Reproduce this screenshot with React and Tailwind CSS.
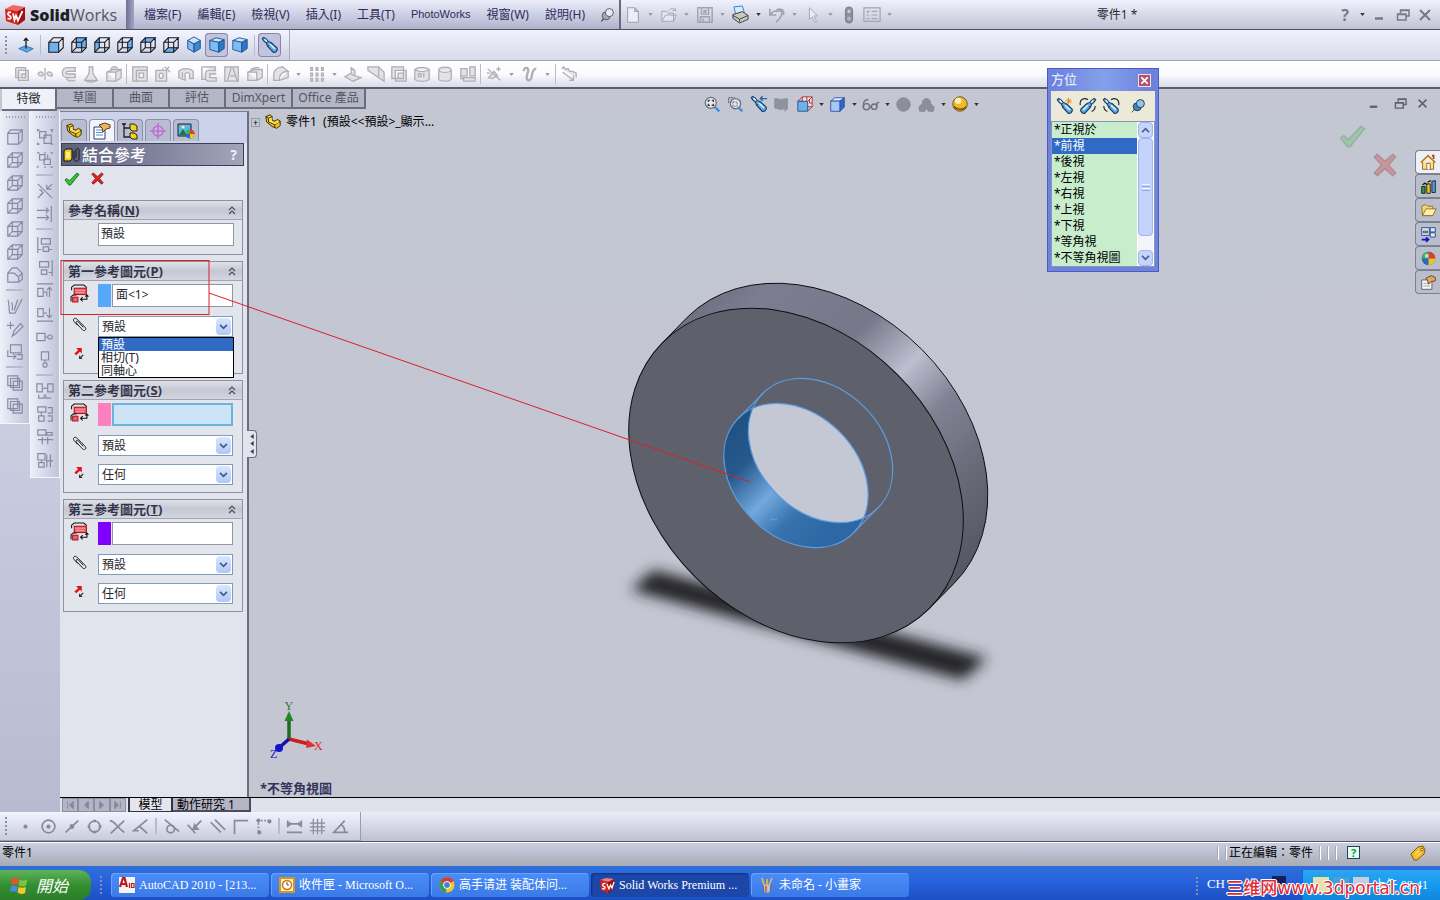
import React from "react";

const UI = "font-['Noto_Sans','Noto_Sans_CJK_TC',sans-serif]";

/* ---------- icon primitives ---------- */
function Ico({ children, className = "size-5" }) {
  return (
    <svg viewBox="0 0 20 20" fill="none" stroke="currentColor" className={className} aria-hidden="true">
      {children}
    </svg>
  );
}

const FACES = {
  front: "M2 7H13V18H2Z",
  back: "M7 2H18V13H7Z",
  left: "M2 7L7 2V13L2 18Z",
  right: "M13 7L18 2V13L13 18Z",
  top: "M2 7L7 2H18L13 7Z",
  bottom: "M2 18L7 13H18L13 18Z",
};

function WireCube({ face, fill = "#6db2ee" }) {
  return (
    <Ico className="size-[18px]">
      {face && <path d={FACES[face]} fill={fill} stroke="none" />}
      <path d="M2 7H13V18H2ZM2 7L7 2H18L13 7M18 2V13L13 18" strokeWidth="1.200" />
      {face !== "front" && <path d="M7 2V13H18M7 13L2 18" strokeWidth="1.200" />}
    </Ico>
  );
}

function SolidCube({ kind }) {
  if (kind === "iso")
    return (
      <Ico className="size-[18px]">
        <path d="M10 1L17 5L10 9L3 5Z" fill="#c9e5fd" stroke="#1e4f8f" />
        <path d="M3 5L10 9V18L3 14Z" fill="#7fbcf3" stroke="#1e4f8f" />
        <path d="M17 5L10 9V18L17 14Z" fill="#3d86d0" stroke="#1e4f8f" />
      </Ico>
    );
  return (
    <Ico className="size-[18px]">
      <path d="M2 5L9 2L18 4L12 7Z" fill="#c9e5fd" stroke="#1e4f8f" />
      <path d="M2 5L12 7V18L2 15Z" fill="#7fbcf3" stroke="#1e4f8f" />
      <path d="M18 4L12 7V18L18 14Z" fill="#2f78c4" stroke="#1e4f8f" />
    </Ico>
  );
}

function ScopeBody() {
  return (
    <>
      <path d="M1.500 3L3 1.500L6 3.500L8 6L11.500 7.500L18 13.500C19 16 16 19 13.500 18L7.500 11.500L6 8L3.500 6Z" fill="#5fa9e2" stroke="#173d66" strokeWidth="1.200" />
      <path d="M6 8L8 6M7.500 11.500L11.500 7.500" stroke="#173d66" />
      <path d="M4 3.500L6.500 6M9.500 8.500L15.500 14.500" stroke="#e2f4ff" strokeWidth="1.600" />
    </>
  );
}

function Scope({ extra }) {
  return (
    <Ico className="size-[18px]">
      <ScopeBody />
      {extra === "star" && <path d="M14 1V8M10.500 4.500H17.500M12 2L16.500 7M16.500 2L12 7" stroke="#e08a1c" />}
      {extra === "arrow" && <path d="M19 4H12M14 1.500L11.500 4L14 6.500" stroke="#2563a8" strokeWidth="1.500" />}
      {extra === "turn" && <path d="M10 3C14 0 20 3 18.500 9M2 10C2 13 3 15 6 16" stroke="#1d2a3a" strokeWidth="1.300" />}
    </Ico>
  );
}

function ScopeLeft() {
  return (
    <Ico className="size-[18px]">
      <g transform="translate(20 0) scale(-1 1)">
        <ScopeBody />
        <path d="M10 3C14 0 20 3 18.500 9M2 10C2 13 3 15 6 16" stroke="#1d2a3a" strokeWidth="1.300" />
      </g>
    </Ico>
  );
}

function Tool({ label, children, active, className = "h-6 w-[23px]" }) {
  return (
    <button
      type="button"
      aria-label={label}
      className={`flex shrink-0 items-center justify-center rounded ${className} ${active ? "bg-[#c2c3dc] ring-1 ring-inset ring-[#8a86a8]" : ""}`}
    >
      {children}
    </button>
  );
}

function Arrow({ dark, className = "w-[13px]" }) {
  return (
    <span className={`flex shrink-0 items-center justify-center ${className} ${dark ? "text-[#303038]" : "text-[#9a9aa6]"}`}>
      <svg viewBox="0 0 6 4" className="h-[3px] w-[5px]" aria-hidden="true">
        <path d="M0 0H6L3 4Z" fill="currentColor" />
      </svg>
    </span>
  );
}

const Sep = ({ className }) => <span className={`shrink-0 bg-[#b9bbca] bg-clip-content ${className}`} />;

const GripV = ({ className = "h-5" }) => (
  <span className={`w-1 shrink-0 bg-[radial-gradient(circle,#8a8ea6_1px,transparent_1px)] bg-[length:4px_4px] ${className}`} />
);

const GripH = () => (
  <span className="mt-1 mb-1.5 h-1 w-5 shrink-0 self-center bg-[radial-gradient(circle,#9a9eb4_1px,transparent_1px)] bg-[length:3px_4px]" />
);

function GreenCheck({ className = "size-4" }) {
  return (
    <svg viewBox="0 0 16 16" className={className} aria-hidden="true">
      <path d="M1 9L3 7.500L5.500 10L13 2L15 3.500L6.500 14L5 14Z" fill="#35c43a" stroke="#0f7a1a" />
    </svg>
  );
}

function RedCross({ className = "size-4" }) {
  return (
    <svg viewBox="0 0 16 16" className={className} aria-hidden="true">
      <path d="M2 3.500L3.500 2L8 6L12.500 2L14 3.500L10 8L14 12.500L12.500 14L8 10L3.500 14L2 12.500L6 8Z" fill="#e22424" stroke="#8f1414" />
    </svg>
  );
}

function WinGlyph({ kind, className = "size-3.5" }) {
  return (
    <svg viewBox="0 0 14 14" fill="none" stroke="currentColor" strokeWidth="1.500" className={className} aria-hidden="true">
      {kind === "min" && <path d="M3 10.500H11" strokeWidth="2.500" />}
      {kind === "max" && <path d="M4.500 5V2H13V8H10.500M1.500 6H10V12H1.500ZM1.500 6.500H10M4.500 2.500H13" />}
      {kind === "close" && <path d="M2 2L12 12M12 2L2 12" strokeWidth="2" />}
    </svg>
  );
}

function PartIcon({ className = "size-5" }) {
  return (
    <svg viewBox="0 0 20 20" className={className} stroke="#2a2206" aria-hidden="true">
      <path d="M2 4L7 2L9 4V8L12 9L15 7L18 9V14L14 17L9 15L3 10Z" fill="#f3c613" />
      <path d="M2 4L5 6L9 4M5 6V10L12 13V16M12 13L18 9.500" fill="none" />
      <path d="M5.500 6.500L8.500 5V9L12 11L15 9L17 10L12.500 12.500L6 9.500Z" fill="#fbe77a" stroke="none" />
    </svg>
  );
}

/* ---------- top area ---------- */
const MENUS = ["檔案(F)", "編輯(E)", "檢視(V)", "插入(I)", "工具(T)", "PhotoWorks", "視窗(W)", "說明(H)"];

const QUICK = [
  ["新增", <path key="a" d="M4 2H12L16 6V18H4ZM12 2V6H16" fill="#eeeff6" strokeWidth="1.200" />, true],
  ["開啟", <path key="a" d="M2 6H7L9 8H15V17H2ZM2 17L6 10H18L15 17M10 5C12 2 15 2 17 5M17 2V5H14" fill="#e4e5ee" />, true],
  ["儲存", <path key="a" d="M2 2H18V18H2ZM6 2V9H14V2M5 18V12H15V18M8 14V17M8 5H12M8 7H12" strokeWidth="1.600" />, true],
  ["列印", null, true],
  ["復原", <path key="a" d="M2 3V10H9M3 9.500C7 2 12 8 13 5C17 6 16 12 9 18M8 6C12 1 19 4 17 10" strokeWidth="1.800" />, true],
  ["選取", <path key="a" d="M6 2V15L9 12L12 18L14 17L11 11H15Z" fill="#ececf4" />, true],
  ["重新計算", <g key="a"><rect x="6" y="1" width="8" height="18" rx="4" fill="#8d8e98" stroke="#777883" /><circle cx="10" cy="6" r="2" fill="#d4d5de" /><circle cx="10" cy="14" r="2" fill="#b9bac6" /></g>, false],
  ["選項", <path key="a" d="M1 2H19V17H1ZM4 6L5 7L7 5M4 10H7M4 14H7M9.500 6H16M9.500 10H16M9.500 14H16" strokeWidth="1.300" />, true],
];

function TitleBar() {
  return (
    <header className="flex h-[30px] shrink-0 items-stretch border-b border-[#50505c] bg-gradient-to-b from-[#f0f1fd] to-[#c3c3d6]">
      <div className="flex w-[126px] shrink-0 items-center gap-1 pl-1">
        <svg viewBox="0 0 22 22" className="size-[22px]" aria-hidden="true">
          <path d="M1 5L9 1L21 3L14 7Z" fill="#ee6a62" />
          <path d="M1 5L14 7V21L2 17Z" fill="#d3221f" />
          <path d="M14 7L21 3V16L14 21Z" fill="#a10f12" />
          <path d="M7 8.500C4 7.500 3 10 5 11.500C8 13 7 16 3.500 14.500M9 9.500L10.500 16L12 11.500L14 16.500L18.500 7" fill="none" stroke="#fff" strokeWidth="1.800" />
        </svg>
        <span className="font-['Open_Sans',sans-serif] text-base text-[#55555c]">
          <b className="font-extrabold text-[#1d1d22]">Solid</b>Works
        </span>
      </div>
      <span className="w-2 shrink-0 bg-gradient-to-r from-[#6e6f96] to-[#a3a4c4]" />
      <nav className="flex shrink-0 items-center gap-4 bg-gradient-to-b from-[#eceefb] to-[#b0b2cc] pr-1 pl-2.5 text-xs text-[#2c2c5a]">
        {MENUS.map((m) => (
          <button key={m} type="button" className={m === "PhotoWorks" ? "font-['Liberation_Sans',sans-serif] text-[11px]" : ""}>{m}</button>
        ))}
        <button type="button" aria-label="固定功能表" className="-ml-0.5">
          <Ico className="size-4">
            <path d="M3 18L8 12" stroke="#444" strokeWidth="1.500" />
            <circle cx="9" cy="11" r="5" fill="#a9abb8" stroke="#444" />
            <circle cx="13" cy="7" r="5" fill="#e9eaf2" stroke="#444" />
          </Ico>
        </button>
      </nav>
      <span className="w-0.5 shrink-0 bg-[#6a6a78]" />
      <div className="flex shrink-0 items-center text-[#a2a3ae]">
        {QUICK.map(([label, art, arrow]) => (
          <React.Fragment key={label}>
            <Tool label={label}>
              {art ? (
                <Ico className="size-[18px]">{art}</Ico>
              ) : (
                <Ico className="size-[19px]">
                  <path d="M3 2L12 1L14 8L5 10Z" fill="#d5eafd" stroke="#2f7fd0" />
                  <path d="M2 10L12 7L18 11V15L9 19L2 14Z" fill="#c9c9c4" stroke="#3c3c3c" />
                  <path d="M2 11L9 15L18 11M9 15V18" stroke="#3c3c3c" />
                </Ico>
              )}
            </Tool>
            {arrow && <Arrow dark={label === "列印"} />}
          </React.Fragment>
        ))}
      </div>
      <h1 className="flex flex-1 items-center justify-center text-xs text-[#2a2a34]">零件1 *</h1>
      <div className="flex shrink-0 items-center pr-2 text-[#777986]">
        <button type="button" aria-label="說明" className="w-3.5 text-base font-bold">?</button>
        <Arrow dark className="w-5" />
        <button type="button" aria-label="最小化" className="mr-2.5"><WinGlyph kind="min" /></button>
        <button type="button" aria-label="還原" className="mr-2"><WinGlyph kind="max" /></button>
        <button type="button" aria-label="關閉"><WinGlyph kind="close" /></button>
      </div>
    </header>
  );
}

function ViewBar() {
  return (
    <div className="flex h-[31px] shrink-0 border-b border-[#a0a1ae] bg-gradient-to-b from-[#eff1fd] to-[#d8dbea]">
      <div className="flex items-center border-r border-[#a9abbc] bg-gradient-to-b from-[#f3f5ff] to-[#ccd0e2] pr-2 pl-1 text-[#16161c]">
        <GripV />
        <span className="w-1.5" />
        <Tool label="正視於">
          <Ico className="size-[18px]">
            <path d="M2 14L9 11L18 14L11 18Z" fill="#5fa8e8" stroke="#2b6db0" />
            <path d="M10 14V3M7.500 5.500L10 2.500L12.500 5.500" strokeWidth="1.400" />
          </Ico>
        </Tool>
        <Sep className="h-5 w-[7px] px-[3px]" />
        {Object.keys(FACES).map((f) => (
          <Tool key={f} label={f}><WireCube face={f} /></Tool>
        ))}
        <Tool label="等角視"><SolidCube kind="iso" /></Tool>
        <Tool label="不等角視" active><SolidCube /></Tool>
        <Tool label="二等角視"><SolidCube /></Tool>
        <Sep className="h-5 w-[7px] px-[3px]" />
        <Tool label="視角方位" active><Scope /></Tool>
      </div>
    </div>
  );
}

const FEATURES = [
  ["伸長", "M3 3H14V14M3 3V14H8M6 6H17V17H6ZM10 10H14V14H10Z"],
  ["旋轉", "M10 3V17M2 10C4 7 7 7 8 10S4 13 2 10M12 10C13 7 16 7 18 10S14 13 12 10"],
  ["掃出", "M18 3H9C2 3 2 14 9 14H18V10H10C7 10 7 7 10 7H18ZM9 14C7 18 14 18 18 17"],
  ["疊層拉伸", "M8 2H12V7C12 12 15 13 17 17H3C5 13 8 12 8 7ZM3 17C8 20 12 20 17 17"],
  ["邊界", "M2 8L9 5H18V14L12 18H2ZM2 8H12V18M12 8L18 5M6 5C8 1 12 1 14 4"],
  "|",
  ["除料", "M2 2H18V18H2ZM6 6H18M6 6V18M9 9H14V14H9Z"],
  ["異型孔", "M2 6H14V18H2ZM8 9C5 9 5 15 8 15S11 9 8 9M12 2L18 8M17 2L13 6M10 3V5"],
  ["旋轉除料", "M2 7C5 3 15 3 18 7V15H14V10C13 8 10 8 9 10V17L2 14ZM6 8V14"],
  ["掃出除料", "M2 2H17V6M2 2V16H6M18 6H9C5 6 5 18 9 18H18V14H11V10H18"],
  ["疊層除料", "M2 2H17V18H2ZM9 3L5 18M11 3L16 18M8 12H13"],
  ["邊界除料", "M2 8L9 5H18V14L12 17H2ZM2 8H12V17M5 5L10 3H15"],
  "|",
  ["圓角", "M2 17V9C3 5 7 2 12 2L18 7C12 7 8 10 8 17ZM8 17L18 14V7", true],
  ["複製排列", "M3 3H5V6H3ZM9 3H11V6H9ZM15 3H17V6H15ZM3 9H5V12H3ZM9 9H11V12H9ZM15 9H17V12H15ZM3 15H5V18H3ZM9 15H11V18H9ZM15 15H17V18H15Z", true],
  ["肋", "M1 13L8 9V3L12 6V12L19 14L10 18ZM8 10L12 12"],
  ["拔模", "M1 2H13L19 8V18L1 6ZM13 2V13"],
  ["薄殼", "M2 2H15V15H2ZM6 6H18V18H6ZM9 9H15V15H9Z"],
  ["包覆", "M2 5C6 2 14 2 18 5V16C14 19 6 19 2 16ZM2 5C6 8 14 8 18 5M6 10H9V13H6ZM12 9V14"],
  ["圓頂", "M3 6C3 1 17 1 17 6V15C17 19 3 19 3 15ZM3 6C6 9 14 9 17 6"],
  ["鏡射", "M2 4H9V12H2ZM12 2H18V12H12ZM5 14H18V18H5ZM2 12V15H5"],
  "|",
  ["參考幾何", "M3 4L17 17M4 14L10 7L14 12L8 15ZM15 2V7M12.500 4.500H17.500M2 9H6", true],
  ["曲線", "M3 7C3 2 9 2 8 7C6 12 5 17 9 17C14 17 10 4 17 4", true, 2.6],
  "|",
  ["即時", "M2 4L4 2L6 5L9 4L11 7L14 7L18 9V14M3 8L15 17M15 12V17H10"],
];

function FeatureBar() {
  return (
    <div className="flex h-7 shrink-0 items-center border-b-2 border-[#5c5c6e] bg-gradient-to-b from-white via-[#fbfbff] to-[#d9dbe8] pl-2.5 text-[#aeaeb3]">
      {FEATURES.map((f, i) =>
        f === "|" ? (
          <Sep key={i} className="h-5 w-[3px] px-px" />
        ) : (
          <React.Fragment key={i}>
            <Tool label={f[0]}>
              <Ico className="size-[18px]">
                <path d={f[1]} fill={f[3] ? "none" : "#e3e3e5"} fillRule="evenodd" strokeWidth={f[3] || 1.4} />
              </Ico>
            </Tool>
            {f[2] && <Arrow />}
          </React.Fragment>
        )
      )}
    </div>
  );
}

const TABS = [
  ["特徵", "w-[55px]"],
  ["草圖", "w-[57px]"],
  ["曲面", "w-14"],
  ["評估", "w-14"],
  ["DimXpert", "w-[67px]"],
  ["Office 產品", "w-[73px]"],
];

function CommandTabs() {
  return (
    <div role="tablist" className="flex h-[22px] shrink-0 items-start bg-[#c4c7d2] pl-0.5 text-xs text-[#55555f]">
      {TABS.map(([t, w], i) => (
        <button
          key={t}
          type="button"
          role="tab"
          aria-selected={i === 0}
          className={`border-r-2 border-b-2 border-[#6b6c80] whitespace-nowrap ${w} ${i === 0 ? "h-[22px] bg-[#f0f1f8] text-[#22222a]" : "h-5 bg-[#b4b7c6]"}`}
        >
          {t}
        </button>
      ))}
    </div>
  );
}

/* ---------- left rails ---------- */
const CUBE = "M2 7H13V18H2ZM2 7L7 2H18L13 7M18 2V13L13 18M7 2V13H18M7 13L2 18";
const RAIL_A = [
  "M2 6H14V18H2ZM2 6L5 2H18L14 6M18 2V14L14 18",
  CUBE,
  CUBE,
  CUBE,
  CUBE,
  CUBE,
  "M2 8L7 2H12L18 8V15L14 18H2ZM2 8H9L14 12V18M14 12L18 8",
  "|",
  "M2 3C4 6 3 14 4 18H10L18 2M6 6C8 8 7 12 7 15M13 3L9 15",
  "M1 6H9M5 2V10M7 18L9 12L16 4L19 7L11 15Z",
  "M5 2H17V11H5ZM2 8V15H10M8 12L11 15L8 18M12 13H18V18H12",
  "|",
  "M2 2H13V13H2ZM5 5H15V15H5ZM8 8H18V18H8Z",
  "M2 2H13V13H2ZM5 5H15V15H5ZM8 8H18V18H8Z",
];

const RAIL_B = [
  "M4 4H11V11H4ZM9 8H17V17H9ZM1 2H4M2 1V4M16 2H19M18 1V5M2 16V19M1 18H4M16 18H19",
  "M4 4H10V10H4ZM9 9H16V15H9ZM1 2H4M9 2H11M16 2H19M2 16V19M9 18H11M16 18H19M13 4V9",
  "|",
  "M2 2L18 18M2 18L8 12M12 8L18 2M4 8L8 12L4 15M12 3V8H17",
  "M1 6H14M1 14H14M11 3L14 6L11 9M11 11L14 14L11 17M17 1V19",
  "|",
  "M2 1V19M6 3H16V9H6ZM8 12H14V17H8ZM2 15H6M14 15H18",
  "M18 1V19M4 3H14V9H4ZM6 12H12V17H6ZM14 15H18",
  "M1 2H19M2 7H8V16H2ZM12 11V16M15 6V17M12 9L15 6L18 9M9 11H12",
  "M1 18H19M2 4H8V13H2ZM15 3V14M12 11L15 14L18 11M9 9H12",
  "M1 6H10V14H1ZM10 10H13M13 10C13 7 18 7 18 10S13 13 13 10",
  "M6 1H14V10H6ZM10 10V13M10 13C7 13 7 18 10 18S13 13 10 13",
  "|",
  "M1 2H7V11H1ZM13 2H19V11H13ZM8 7H12M3 14V18H9V14M11 14V18H17",
  "M2 2H11V8H2ZM3 12H9V18H3ZM13 3H18V9H13M13 12H18V18H13M6 8V12",
  "M2 2H11V8H2ZM12 5H18V8H12ZM2 13H19M7 10V18M13 10V18",
  "M2 3H10V10H2ZM3 13H9V18H3ZM12 4V18M16 4V18M11 11H19M6 10V13",
];

function Rail({ items, name, className }) {
  return (
    <div aria-label={name} className={`flex flex-col border-r border-b border-[#f5f6fc] bg-gradient-to-r from-[#eef0fa] to-[#bfc4d8] text-[#858aa0] ${className}`}>
      <GripH />
      {items.map((d, i) =>
        d === "|" ? (
          <Sep key={i} className="mx-1.5 h-2 py-[3px]" />
        ) : (
          <button key={i} type="button" aria-label={`${name} ${i + 1}`} className="flex h-[23px] shrink-0 items-center justify-center">
            <Ico className="size-[18px]"><path d={d} strokeWidth="1.300" /></Ico>
          </button>
        )
      )}
    </div>
  );
}

/* ---------- property manager ---------- */
function Select({ label, value, options, id }) {
  return (
    <div className="relative ml-[34px] mr-[9px] h-[21px]">
      <select
        id={id}
        aria-label={label}
        defaultValue={value}
        className="block h-full w-full appearance-none border border-[#7f9db9] bg-white pl-[3px] text-xs leading-4 text-[#26262e] outline-none"
      >
        {options.map((o) => <option key={o} value={o}>{o}</option>)}
      </select>
      <span className="pointer-events-none absolute top-0.5 right-0.5 flex h-[17px] w-[15px] items-center justify-center rounded-sm bg-gradient-to-b from-[#dbe6fd] to-[#b0c8f6]">
        <svg viewBox="0 0 10 7" className="h-[6px] w-[9px]" fill="none" stroke="#3f5f8f" strokeWidth="2" aria-hidden="true">
          <path d="M1 1L5 5L9 1" />
        </svg>
      </span>
    </div>
  );
}

function Row({ icon, children, className }) {
  return (
    <div className={`grid grid-cols-1 ${className}`}>
      <span className="col-start-1 row-start-1 flex w-[30px] items-center justify-center pb-1">{icon}</span>
      <div className="col-start-1 row-start-1">{children}</div>
    </div>
  );
}

const EntityIcon = (
  <svg viewBox="0 0 18 18" className="h-[19px] w-[19px]" fill="none" aria-hidden="true">
    <path d="M1.500 6V3L4 1H13L16 3.500" stroke="#111" />
    <rect x="4" y="4" width="11.500" height="6" fill="#e8636b" stroke="#b3121c" />
    <path d="M5 6H15M6 8H14" stroke="#ffd0d0" strokeDasharray="1 1" />
    <path d="M1 16.500V12L3 10.500H6" stroke="#111" />
    <rect x="2.500" y="12.500" width="5" height="4.500" fill="#e8636b" stroke="#b3121c" />
    <path d="M10 14.500H16V11M12 12.500L10 14.500L12 16.500M14.500 12L16 10.500L17.500 12" stroke="#111" />
  </svg>
);
const ClipIcon = (
  <svg viewBox="0 0 16 16" className="size-[15px]" fill="none" stroke="#1a1a1a" aria-hidden="true">
    <path d="M6 9L2 4.500C0.500 2 3 0.500 5 2L14 11C16 13.500 13.500 15.500 11.500 14L4.500 6.500C4 5 5.500 4 6.500 5L12 11" />
  </svg>
);
const AlignIcon = (
  <svg viewBox="0 0 12 14" className="h-[13px] w-3" aria-hidden="true">
    <path d="M1 7L5 3.500L3 1H9V7L7 5L3 9Z" fill="#dd1418" />
    <path d="M6 13V9L7.500 10.500L10 8L11 9L8.500 11.500L10 13Z" fill="#333" />
  </svg>
);

function Group({ title, hot, children }) {
  return (
    <section className="mx-[3px] mr-1 border border-[#8f91a0] bg-[#e3e5ed]">
      <h2 className="flex h-[19px] items-center justify-between border-b border-[#a2a4b2] bg-gradient-to-b from-[#dfe1e9] via-[#c5c8d3] to-[#d4d6e0] pr-1.5 pl-1 text-[13px] leading-none font-bold text-[#33344a]">
        <span>{title}(<u>{hot}</u>)</span>
        <button type="button" aria-label={`收合${title}`}>
          <svg viewBox="0 0 8 9" className="h-[9px] w-2" fill="none" stroke="#4a4b5c" strokeWidth="1.200" aria-hidden="true">
            <path d="M1 4L4 1L7 4M1 8L4 5L7 8" />
          </svg>
        </button>
      </h2>
      {children}
    </section>
  );
}

const ALIGNS = ["任何", "對正", "反向對正"];

function EntityGroup({ title, hot, id, color, value, focus, open }) {
  return (
    <Group title={title} hot={hot}>
      <div className="flex flex-col pt-[3px] pb-[7px]">
        <Row icon={EntityIcon}>
          <div className="mr-[9px] ml-[34px] flex h-[23px] gap-px">
            <span className={`w-[13px] shrink-0 ${color}`} />
            <input
              aria-label={title}
              defaultValue={value}
              className={`w-0 flex-1 pb-0.5 pl-[3px] text-xs text-[#26262e] outline-none ${focus ? "border-2 border-[#6bb3df] bg-[#cde3f6]" : "border border-[#9395a6] bg-white"}`}
            />
          </div>
        </Row>
        <Row icon={ClipIcon} className="mt-[9px]">
          <Select id={`${id}-type`} label={`${title} 類型`} value="預設" options={["預設", "相切(T)", "同軸心"]} />
          {open && (
            <ul role="listbox" className="absolute z-10 ml-[34px] w-[136px] border border-black bg-white text-xs leading-[13px] text-[#26262e]">
              <li role="option" aria-selected="true" className="bg-[#316ac5] pl-0.5 text-white">預設</li>
              <li role="option" aria-selected="false" className="pl-0.5">相切(T)</li>
              <li role="option" aria-selected="false" className="pl-0.5">同軸心</li>
            </ul>
          )}
        </Row>
        <Row icon={AlignIcon} className="mt-2">
          <Select id={`${id}-align`} label={`${title} 對正`} value={open ? "" : "任何"} options={open ? ["", ...ALIGNS] : ALIGNS} />
        </Row>
      </div>
    </Group>
  );
}

const PM_TABS = [
  ["FeatureManager", <PartIcon key="a" className="size-[18px]" />],
  ["PropertyManager", (
    <svg key="a" viewBox="0 0 18 18" className="size-[18px]" aria-hidden="true">
      <path d="M1 5H12V17H1Z" fill="#fff" stroke="#2a3c66" />
      <path d="M3 8H10M3 10.500H10M3 13H10" stroke="#4f8fd8" />
      <path d="M6 3L12 1L17 3V6L13 7L10 10L9 6Z" fill="#e9b560" stroke="#5a3a10" />
    </svg>
  )],
  ["ConfigurationManager", (
    <svg key="a" viewBox="0 0 18 18" className="size-[18px]" aria-hidden="true">
      <path d="M3 1V15H9M3 6H9M1 2H5" fill="none" stroke="#222" strokeWidth="1.300" />
      <path d="M9 2H13L16 4V9H11L9 7Z" fill="#f3d11c" stroke="#222" />
      <path d="M9 11H13L16 13V17H11L9 15Z" fill="#f3d11c" stroke="#222" />
    </svg>
  )],
  ["DimXpertManager", (
    <svg key="a" viewBox="0 0 18 18" className="size-[18px]" fill="none" stroke="#c06fd8" strokeWidth="1.600" aria-hidden="true">
      <circle cx="9" cy="9" r="5" />
      <path d="M9 1V17M1 9H17" />
    </svg>
  )],
  ["PhotoWorks", (
    <svg key="a" viewBox="0 0 18 18" className="size-[18px]" aria-hidden="true">
      <path d="M1 2H14V14H1Z" fill="#5fb4ee" stroke="#123" />
      <path d="M2 13L6 7L10 13Z" fill="#1d7a34" />
      <circle cx="6" cy="5" r="1.500" fill="#fff27a" />
      <circle cx="13" cy="12" r="4.500" fill="#2b66c9" />
      <path d="M13 12V7.500A4.500 4.500 0 0 1 17.500 12Z" fill="#e33b2b" />
      <path d="M13 12H17.500A4.500 4.500 0 0 1 13 16.500Z" fill="#f0c419" />
      <path d="M13 12H8.500A4.500 4.500 0 0 1 13 7.500Z" fill="#43b649" />
    </svg>
  )],
];

function PropertyPanel() {
  return (
    <aside className="flex w-[187px] shrink-0 flex-col border-t border-[#7d7f93] bg-[#e1e4ec]">
      <div role="tablist" className="flex h-[31px] items-end gap-0.5 bg-[#ccd2ea] px-px pb-0.5">
        {PM_TABS.map(([name, art], i) => (
          <button
            key={name}
            type="button"
            role="tab"
            aria-label={name}
            aria-selected={i === 1}
            className={`flex h-[22px] w-[26px] items-center justify-center rounded-t border border-b-0 border-[#8c8fa6] ${i === 1 ? "bg-[#f4f5fb]" : "bg-[#b9bdd0]"}`}
          >
            {art}
          </button>
        ))}
      </div>
      <div className="mx-px mr-[3px] flex h-[23px] items-center border border-[#3d3e58] bg-gradient-to-r from-[#5e607e] to-[#a3a5ba] pr-1.5 pl-px text-white">
        <svg viewBox="0 0 18 16" className="h-4 w-[18px]" fill="none" aria-hidden="true">
          <path d="M1 4L3 2H9V12L7 14H1Z" fill="#f0cc1c" stroke="#111" />
          <path d="M3 5H7V11H3Z" fill="#fbee8f" />
          <path d="M11 4V12C11 15 16 15 16 12V3C16 1 13 1 13 3V11" stroke="#15151c" />
        </svg>
        <h2 className="pl-px text-base leading-5 font-medium">結合參考</h2>
        <button type="button" aria-label="說明" className="ml-auto text-sm font-bold text-[#eef]">?</button>
      </div>
      <div className="flex h-[34px] items-start gap-2.5 pt-[5px] pl-1">
        <button type="button" aria-label="確定"><GreenCheck /></button>
        <button type="button" aria-label="取消"><RedCross className="size-[15px]" /></button>
      </div>
      <div className="flex flex-col gap-1.5">
        <Group title="參考名稱" hot="N">
          <div className="pt-[3px] pb-2">
            <input aria-label="參考名稱" defaultValue="預設" className="mr-[9px] ml-[34px] block h-[23px] w-[136px] border border-[#9395a6] bg-white pb-1 pl-0.5 text-xs text-[#26262e] outline-none" />
          </div>
        </Group>
        <EntityGroup id="e1" title="第一參考圖元" hot="P" color="bg-[#55a8fb]" value="面<1>" open />
        <EntityGroup id="e2" title="第二參考圖元" hot="S" color="bg-[#fc7fbf]" value="" focus />
        <EntityGroup id="e3" title="第三參考圖元" hot="T" color="bg-[#7f00ff]" value="" />
      </div>
    </aside>
  );
}

/* ---------- graphics area ---------- */
function Washer() {
  return (
    <svg viewBox="600 270 420 440" className="absolute top-[159px] left-[350px] h-[440px] w-[420px]" aria-label="零件模型" role="img">
      <defs>
        <linearGradient id="rim" gradientUnits="userSpaceOnUse" x1="500" y1="500" x2="780" y2="780">
          <stop offset="0" stopColor="#6e6f7f" />
          <stop offset=".1" stopColor="#7c7d90" />
          <stop offset=".34" stopColor="#767789" />
          <stop offset=".49" stopColor="#bdbfd1" />
          <stop offset=".62" stopColor="#808193" />
          <stop offset=".8" stopColor="#686977" />
          <stop offset="1" stopColor="#51525c" />
        </linearGradient>
        <linearGradient id="bore" gradientUnits="userSpaceOnUse" x1="717" y1="475" x2="859" y2="475">
          <stop offset="0" stopColor="#1f5283" />
          <stop offset=".25" stopColor="#27598c" />
          <stop offset=".53" stopColor="#72a8de" />
          <stop offset=".75" stopColor="#3773ae" />
          <stop offset="1" stopColor="#2e68a4" />
        </linearGradient>
        <filter id="soft" x="-20%" y="-60%" width="140%" height="220%">
          <feGaussianBlur stdDeviation="7" />
        </filter>
        <clipPath id="boreClip">
          <ellipse cx="797" cy="475.500" rx="81.200" ry="61.700" transform="rotate(45 797 475.500)" />
        </clipPath>
      </defs>
      <path d="M632 590L654 570L988 658L964 680Z" fill="#222427" filter="url(#soft)" />
      <path d="M688.280 317.280A188.400 143.100 45 0 1 954.720 583.720L930 608.700L663.800 342.300Z" fill="url(#rim)" stroke="#0d0e12" />
      <ellipse cx="797" cy="475.500" rx="188.400" ry="143.100" transform="rotate(45 797 475.500)" fill="#5e616b" stroke="#0d0e12" />
      <ellipse cx="797" cy="475.500" rx="81.200" ry="61.700" transform="rotate(45 797 475.500)" fill="url(#bore)" />
      <g clipPath="url(#boreClip)">
        <ellipse cx="821.500" cy="450.500" rx="81.200" ry="61.700" transform="rotate(45 821.500 450.500)" fill="#c4c8d4" />
      </g>
      <g fill="none" stroke="#5b9be0" strokeWidth="1.300">
        <ellipse cx="797" cy="475.500" rx="81.200" ry="61.700" transform="rotate(45 797 475.500)" />
        <ellipse cx="821.500" cy="450.500" rx="81.200" ry="61.700" transform="rotate(45 821.500 450.500)" />
        <path d="M739.600 418.100L764.100 393.100M854.400 532.900L878.900 507.900M771 519.500H778" />
      </g>
    </svg>
  );
}

function Triad() {
  return (
    <svg viewBox="0 0 60 64" className="absolute bottom-[34px] left-4 h-16 w-[60px]" aria-label="座標軸" role="img">
      <path d="M24 40V20" stroke="#1d6b1d" strokeWidth="3.500" />
      <path d="M24 12L28.500 22H19.500Z" fill="#1f8a24" />
      <path d="M24 40L44 45" stroke="#c81e1e" strokeWidth="3.500" />
      <path d="M51 47L41 49L42 40.500Z" fill="#e03030" />
      <path d="M24 40L15 48" stroke="#1414a0" strokeWidth="3.500" />
      <circle cx="14" cy="49" r="4" fill="#1414d0" />
      <g className="font-['Liberation_Serif',serif]" fontSize="12">
        <text x="19.500" y="11" fill="#2a7a3a">Y</text>
        <text x="49" y="51" fill="#e02424">X</text>
        <text x="5" y="59" fill="#1a1ad0">Z</text>
      </g>
    </svg>
  );
}

function HeadsUpBar() {
  return (
    <div className="absolute top-[5px] left-[701px] flex h-5 items-center text-[#6b6e7c]">
      <Tool label="適當大小"><Ico className="size-[17px]"><circle cx="8" cy="8" r="6.500" fill="#e6e9f2" strokeWidth="1.500" /><path d="M5 7V5H7M9 5H11V7M11 9V11H9M7 11H5V9" stroke="#333" strokeWidth="1.400" /><path d="M13 13L18 18" stroke="#4a8ed8" strokeWidth="3" /></Ico></Tool>
      <Tool label="局部放大"><Ico className="size-[17px]"><path d="M2 8V2H9" strokeDasharray="2 1" stroke="#333" /><circle cx="10" cy="9" r="6" fill="#e6e9f2" strokeWidth="1.500" /><path d="M7 7H12V12H7Z" strokeDasharray="2 1" stroke="#555" /><path d="M14 14L18 18" stroke="#4a8ed8" strokeWidth="3" /></Ico></Tool>
      <Tool label="前一個視角"><Scope extra="arrow" /></Tool>
      <Tool label="剖面視角"><Ico className="size-[17px]"><path d="M2 3L9 4L17 3V15L14 18V15L9 16L2 14Z" fill="#8e919e" stroke="#8e919e" /></Ico></Tool>
      <Tool label="視角方位"><Ico className="size-[18px]"><path d="M7 2H18V13H7Z" fill="#f3dfe0" stroke="#a33" /><path d="M12 2V7M7 7L2 7L7 2M18 2L13 7M18 13L13 18M15 5V9H18" stroke="#a33" /><path d="M2 7H13V18H2Z" fill="#6fb0ea" stroke="#1e4f8f" /></Ico></Tool>
      <Arrow dark className="w-2.5" />
      <Tool label="顯示樣式"><Ico className="size-[17px]"><path d="M2 6L7 2H18L13 6Z" fill="#dcebfb" stroke="#2a4f9f" /><path d="M2 6H13V18H2Z" fill="#a9c8f4" stroke="#2a4f9f" /><path d="M13 6L18 2V13L13 18Z" fill="#2f66d0" stroke="#2a4f9f" /></Ico></Tool>
      <Arrow dark className="w-2.5" />
      <Tool label="隱藏/顯示"><Ico className="size-[18px]"><circle cx="5" cy="13" r="3.500" strokeWidth="1.500" /><circle cx="13.500" cy="13" r="3" strokeWidth="1.500" /><path d="M1.500 13C1 8 3 5 7 5M8.500 13H10.500M16.500 13V9L19 8" strokeWidth="1.500" /></Ico></Tool>
      <Arrow dark className="w-2.5" />
      <Tool label="編輯外觀"><Ico className="size-[17px]"><circle cx="10" cy="10" r="8" fill="#8c8f9a" stroke="#85889a" /></Ico></Tool>
      <Tool label="套用全景"><Ico className="size-[17px]"><path d="M5 9C5 1 15 1 15 9L19 13L18 18H12L10 14L8 18H2L1 13Z" fill="#8c8f9a" stroke="#85889a" /></Ico></Tool>
      <Arrow dark className="w-2.5" />
      <Tool label="檢視設定"><Ico className="size-[18px]"><circle cx="10" cy="10" r="8" fill="#f0b92c" stroke="#6b4a08" /><circle cx="8" cy="6.500" r="3.500" fill="#fff3bf" stroke="none" /><path d="M3 13C7 17 14 17 17 13" stroke="#7a5a10" strokeWidth="2" /></Ico></Tool>
      <Arrow dark className="w-2.5" />
    </div>
  );
}

const VIEWS = ["*正視於", "*前視", "*後視", "*左視", "*右視", "*上視", "*下視", "*等角視", "*不等角視圖"];

function ScrollButton({ up }) {
  return (
    <button type="button" aria-label={up ? "向上捲動" : "向下捲動"} className="flex h-4 w-full items-center justify-center rounded-sm border border-[#9db6ec] bg-[#c5d5fc]">
      <svg viewBox="0 0 10 7" className="h-[6px] w-[9px]" fill="none" stroke="#4d6185" strokeWidth="2" aria-hidden="true">
        <path d={up ? "M1 6L5 2L9 6" : "M1 1L5 5L9 1"} />
      </svg>
    </button>
  );
}

function OrientationDialog() {
  return (
    <div role="dialog" aria-label="方位" className="absolute top-[68px] left-[1047px] z-20 w-28 border border-[#4a5cc4] bg-[#6e84dc] px-[3px] pb-1">
      <div className="flex h-[22px] items-center justify-between bg-gradient-to-r from-[#6c80dc] via-[#84a0ea] to-[#6c80dc] pr-1 text-[13px] font-medium text-[#dce8ff]">
        方位
        <button type="button" aria-label="關閉" className="flex size-[13px] items-center justify-center border border-white/80 bg-[#b0566c] text-white">
          <svg viewBox="0 0 8 8" className="size-[7px]" stroke="currentColor" strokeWidth="2" aria-hidden="true"><path d="M0 0L8 8M8 0L0 8" /></svg>
        </button>
      </div>
      <div className="flex h-[30px] items-center bg-[#ece9d8] pl-0.5">
        <Tool label="新視角"><Scope extra="star" /></Tool>
        <Tool label="更新標準視角"><ScopeLeft /></Tool>
        <Tool label="重設標準視角"><Scope extra="turn" /></Tool>
        <span className="w-1" />
        <Tool label="固定">
          <Ico className="size-4"><path d="M2 18L7 13" stroke="#234" /><circle cx="9" cy="11" r="5" fill="#3f86c0" stroke="#123" /><circle cx="13" cy="7" r="5" fill="#8fc6ef" stroke="#123" /></Ico>
        </Tool>
      </div>
      <div className="flex border border-[#8a93b8] bg-[#c7edcc]">
        <ul role="listbox" aria-label="視角" className="flex-1 text-xs leading-4 text-black">
          {VIEWS.map((v, i) => (
            <li key={v} role="option" aria-selected={i === 1} className={`pl-0.5 whitespace-nowrap ${i === 1 ? "bg-[#316ac5] text-white" : ""}`}>{v}</li>
          ))}
        </ul>
        <div className="flex w-[17px] shrink-0 flex-col border-x border-white bg-[#f4f5fb]">
          <ScrollButton up />
          <span className="flex h-[98px] flex-col items-center justify-center gap-px rounded-sm border border-[#9db6ec] bg-[#c3d3fc]">
            <i className="h-px w-2 bg-[#eef4fe]" /><i className="h-px w-2 bg-[#8ca6e4]" /><i className="h-px w-2 bg-[#eef4fe]" /><i className="h-px w-2 bg-[#8ca6e4]" />
          </span>
          <span className="flex-1" />
          <ScrollButton />
        </div>
      </div>
    </div>
  );
}

const TASK_TABS = [
  ["SolidWorks 資源", <g key="a"><path d="M3 9V18H16V9" fill="#fbe08a" stroke="#8a5a10" /><path d="M1 10L9.500 2L18 10" stroke="#c27a10" strokeWidth="2" /><path d="M8 18V11H12V18" stroke="#8a5a10" fill="#fff" /><path d="M14 2H16V6" stroke="#b33" strokeWidth="2" /></g>],
  ["Design Library", <g key="a"><path d="M2 10H6V18H2Z" fill="#2f9a4a" stroke="#111" /><path d="M8 7H12V18H8Z" fill="#f0cc1c" stroke="#111" /><path d="M14 4L18 3V17H14Z" fill="#5b9ce8" stroke="#111" /><path d="M3 8L6 6L8 8M9 5L13 3" stroke="#111" strokeWidth="1.500" /></g>],
  ["檔案總管", <g key="a"><path d="M2 5L7 3L9 5H15V16H3Z" fill="#f6d775" stroke="#8f6a14" /><path d="M3 16L7 8H19L15 16Z" fill="#fdedae" stroke="#8f6a14" /></g>],
  ["檢視調色盤", <g key="a"><path d="M2 2H11V11H2ZM12 2H18V7H12ZM12 8H18V13H12Z" fill="#dfeaf8" stroke="#1f3c7a" /><path d="M4 6H9V8H4Z" fill="#e6cf3a" stroke="#1f3c7a" /><path d="M2 16H9M7 13.500L10 16L7 18.500" stroke="#1616c8" strokeWidth="2" /></g>],
  ["外觀", <g key="a" stroke="none"><circle cx="10" cy="10" r="8" fill="#2f66c9" /><path d="M10 10V2A8 8 0 0 1 18 10Z" fill="#e33b2b" /><path d="M10 10H18A8 8 0 0 1 10 18Z" fill="#f0c419" /><path d="M10 10H2A8 8 0 0 1 10 2Z" fill="#3bb04a" /><circle cx="8" cy="7" r="2.500" fill="#fff" opacity=".6" /></g>],
  ["自訂屬性", <g key="a"><path d="M2 7H14V18H2Z" fill="#f7f7fa" stroke="#555" /><path d="M4 11H12M4 14H12" stroke="#999" /><path d="M7 5L13 2L18 4V8L13 9L10 12L9 8Z" fill="#e0a868" stroke="#5a3a10" /></g>],
];

function Viewport() {
  return (
    <div className="relative flex-1 overflow-hidden border-l-2 border-[#6c6e80] bg-gradient-to-b from-[#c3c7d2] to-[#c4c6d2]">
      <div className="flex h-[22px] items-center gap-1 pl-0.5 text-xs text-black">
        <span className="flex size-[9px] items-center justify-center border border-[#9a9caa] text-[9px] leading-none">+</span>
        <PartIcon className="size-[18px]" />
        <span className="whitespace-pre">零件1  (預設&lt;&lt;預設&gt;_顯示...</span>
      </div>
      <Washer />
      <Triad />
      <p className="absolute bottom-0 left-[11px] text-[13px] leading-[18px] font-bold text-[#33335c]">*不等角視圖</p>
      <button type="button" aria-label="確定" className="absolute top-3 right-[74px] opacity-25"><GreenCheck className="size-[27px]" /></button>
      <button type="button" aria-label="取消" className="absolute top-10 right-[41px] opacity-30"><RedCross className="size-7" /></button>
      <div role="tablist" aria-label="工作窗格" className="absolute top-[39px] right-0 flex flex-col">
        {TASK_TABS.map(([name, art], i) => (
          <button key={name} type="button" role="tab" aria-label={name} aria-selected={i === 0} className={`flex h-6 w-[25px] items-center justify-center rounded-l border border-r-0 border-[#7d7f93] ${i === 0 ? "bg-[#eef0f8]" : "bg-[#b9bdcc]"}`}>
            <Ico className="size-[17px]">{art}</Ico>
          </button>
        ))}
      </div>
    </div>
  );
}

function MotionTabs() {
  return (
    <div className="flex h-[15px] shrink-0 items-stretch border-t border-black bg-[#dfe2ea] pl-0.5 text-xs leading-[13px] text-black">
      {["M4 2V10M10 2L6 6L10 10Z", "M9 2L5 6L9 10Z", "M4 2L8 6L4 10Z", "M3 2L7 6L3 10ZM9 2V10"].map((d, i) => (
        <button key={d} type="button" aria-label={`捲動標籤 ${i + 1}`} className="flex w-4 items-center justify-center border border-[#8b8da0] bg-[#b3b5c6] text-[#85879a]">
          <svg viewBox="0 0 13 12" className="h-3 w-3" fill="currentColor" stroke="currentColor" aria-hidden="true"><path d={d} /></svg>
        </button>
      ))}
      <button type="button" className="ml-0.5 w-[45px] border-r-2 border-b border-l-2 border-[#33343f] bg-[#e4e6ee]">模型</button>
      <button type="button" className="w-[78px] border-r-2 border-b-2 border-[#4c4d5c] bg-[#b4b6c6] pr-2.5">動作研究 1</button>
    </div>
  );
}

const SNAPS = [
  <circle key="a" cx="10" cy="10" r="1.500" fill="currentColor" />,
  <g key="a"><circle cx="10" cy="10" r="7.500" /><circle cx="10" cy="10" r="1.500" fill="currentColor" /></g>,
  <g key="a"><path d="M3 17L18 3" /><circle cx="10.500" cy="10" r="1.800" fill="currentColor" /></g>,
  <g key="a"><circle cx="10" cy="10" r="6.500" /><path d="M10 2V5M10 15V18M2 10H5M15 10H18" strokeWidth="3.500" /></g>,
  <path key="a" d="M1 3C8 4 8 10 18 17M18 3L2 18" />,
  <path key="a" d="M18 2L2 15H8M9 10L18 18" />,
  "|",
  <g key="a"><circle cx="9" cy="13" r="4.500" /><path d="M2 2L19 16" /></g>,
  <g key="a"><path d="M2 8L11 18M18 3L8 13" /><path d="M10 8L14 13H9Z" fill="currentColor" /></g>,
  <path key="a" d="M7 2L19 14M2 5L14 17" />,
  <path key="a" d="M3 19V3H19" />,
  <g key="a"><path d="M4 16V3H17" strokeDasharray="2 2" /><circle cx="4" cy="3" r="1.500" fill="currentColor" /><circle cx="17" cy="4" r="1.500" fill="currentColor" /><circle cx="5" cy="17" r="1.500" fill="currentColor" /></g>,
  "|",
  <path key="a" d="M2 3V11M18 3V11M2 7H18M5 5L3 7L5 9M15 5L17 7L15 9M1 17H19" />,
  <path key="a" d="M5 1V19M10 1V19M15 1V19M1 6H19M1 10.500H19M1 15H19" strokeWidth="1.400" />,
  <path key="a" d="M15 3L2 17H19M10 8C14 9 15 12 15 17" />,
];

function SnapBar() {
  return (
    <div className="flex h-[30px] shrink-0 border-b border-[#55565f] bg-gradient-to-b from-[#eaecfa] to-[#bfc1d2]">
      <div className="flex items-center border-r border-b border-[#9a9caf] bg-gradient-to-b from-[#f1f3fe] to-[#c9ccde] pr-2 pl-1 text-[#888a98]">
        <GripV />
        <span className="w-1.5" />
        {SNAPS.map((s, i) =>
          s === "|" ? (
            <Sep key={i} className="h-4 w-2 px-[3px]" />
          ) : (
            <Tool key={i} label={`快速抓取 ${i + 1}`}><Ico className="size-[17px]"><g strokeWidth="2">{s}</g></Ico></Tool>
          )
        )}
      </div>
    </div>
  );
}

function StatusBar() {
  const line = <i className="h-3.5 w-0.5 border-r border-white bg-[#a5a8b6]" />;
  return (
    <footer className="flex h-6 shrink-0 items-center border-t border-white bg-gradient-to-b from-[#cbcee0] to-[#a9acb6] pr-[14px] pb-1 pl-0.5 text-xs text-black">
      <span>零件1</span>
      <span className="ml-auto flex items-center gap-1.5">{line}{line}</span>
      <span className="px-0.5">正在編輯：零件</span>
      <span className="ml-1 flex items-center gap-1.5">{line}{line}{line}</span>
      <button type="button" aria-label="快速提示" className="mr-[50px] ml-2.5 flex size-[13px] items-center justify-center border border-[#245] bg-[#e6fbf4] text-[11px] leading-none font-bold text-[#0a9a3a]">?</button>
      <button type="button" aria-label="標籤">
        <svg viewBox="0 0 16 16" className="size-4" aria-hidden="true">
          <path d="M1 9L8 2L13 1L15 5L14 9L7 15H4Z" fill="#f3bd2c" stroke="#8a5a08" />
          <circle cx="12" cy="4.500" r="1.300" fill="#fff" stroke="#8a5a08" />
          <path d="M5 9L9 6M7 11L11 8" stroke="#fde9a0" />
        </svg>
      </button>
    </footer>
  );
}

/* ---------- task bar ---------- */
const TASKS = [
  ["AutoCAD 2010 - [213...", (
    <g key="a"><path d="M0 0H16V16H0Z" fill="#f4f4f4" /><path d="M1 10L4 1H5.500L8 10M2 7H7" stroke="#c4161c" strokeWidth="2.200" fill="none" /><path d="M10.500 6V11M12.500 6.500H15V10.500H12.500Z" stroke="#c4161c" strokeWidth="1.200" fill="none" /></g>
  )],
  ["收件匣 - Microsoft O...", (
    <g key="a"><path d="M1 1H15V15H1Z" fill="#fff1c2" stroke="#d8951d" strokeWidth="2" /><circle cx="8" cy="8" r="4.500" fill="#fff" stroke="#c2771a" strokeWidth="1.500" /><path d="M8 5V8H10" stroke="#7a4a10" fill="none" /></g>
  )],
  ["高手请进 装配体问...", (
    <g key="a"><circle cx="8" cy="8" r="7.500" fill="#f5c81e" /><path d="M8 8L1.500 4A7.500 7.500 0 0 1 14.500 4Z" fill="#dd3a2a" /><path d="M8 8L1.500 4A7.500 7.500 0 0 0 7 15.500Z" fill="#3a9f46" /><circle cx="8" cy="8" r="3.500" fill="#3f7fe0" stroke="#fff" /></g>
  )],
  ["Solid Works Premium ...", (
    <g key="a"><path d="M1 3L7 1L15 2L10 5Z" fill="#f08078" /><path d="M1 3L9 5V16L2 13Z" fill="#d3221f" /><path d="M9 5L15 2V12L9 16Z" fill="#a10f12" /><path d="M6.500 6.500C3 6 3 9 5 9.500S6 13 3 11.500M8 7L10 12L11.500 8L13 11L15 5" fill="none" stroke="#fff" strokeWidth="1.300" /></g>
  ), true],
  ["未命名 - 小畫家", (
    <g key="a"><path d="M4 7H12L11 16H5Z" fill="#b7c4cf" stroke="#667" /><path d="M5 8L3 1M8 8V2M10 8L13 1" stroke="#e2b64a" strokeWidth="1.800" /><path d="M7 9V15" stroke="#d24a3a" strokeWidth="1.500" /></g>
  )],
];

function TaskBar() {
  return (
    <div className="relative flex h-[34px] shrink-0 items-stretch bg-gradient-to-b from-[#2f6fd8] via-[#2660dd] to-[#1c4fc4] font-['Liberation_Serif','Noto_Sans_CJK_TC',serif] text-[13px] text-white">
      <button type="button" className="mt-1 flex w-[91px] items-center gap-2 rounded-r-xl bg-gradient-to-b from-[#5fb45a] via-[#338f30] to-[#2c7d2a] pl-2.5 font-['Noto_Sans_CJK_TC',sans-serif] text-base leading-none italic">
        <svg viewBox="0 0 18 17" className="h-[17px] w-[18px]" aria-hidden="true">
          <path d="M2 2C5 0 7 1 8.500 2L7.500 8C5 6.500 3 7 1 8Z" fill="#e8542c" />
          <path d="M9.500 2.500C12 4 15 3.500 17.500 2L16 8.500C13 10 11 9.500 8.500 8.500Z" fill="#7fc242" />
          <path d="M1 9.500C3 8 5 8.500 7.500 9.500L6.500 15C4 14 2 14 0 15Z" fill="#4a8ae8" />
          <path d="M8.500 10C11 11 13 11 16 10L15 16C12 17.500 10 17 7.500 15.500Z" fill="#f7c72c" />
        </svg>
        <span>開始</span>
      </button>
      <span className="mx-2 flex items-center"><GripV className="mt-1 h-5" /></span>
      <div className="flex items-center gap-0.5 pt-1">
        {TASKS.map(([t, art, on]) => (
          <button key={t} type="button" className={`flex h-6 w-[158px] items-center gap-1 rounded-sm pl-2 whitespace-nowrap ${on ? "bg-[#1c47a8] shadow-[inset_1px_1px_2px_#10307c]" : "bg-gradient-to-b from-[#4b8df8] to-[#3a7ae8] shadow-[inset_1px_1px_0_#6aa3fb]"}`}>
            <svg viewBox="0 0 16 16" className="size-4 shrink-0" aria-hidden="true">{art}</svg>
            <span className="text-xs">{t}</span>
          </button>
        ))}
      </div>
      <span className="ml-auto flex items-center gap-2 pt-0.5"><GripV className="mt-1 h-5" /><span>CH</span></span>
      <span className="flex w-[77px] items-center justify-end pt-0.5 pr-4"><i className="h-4 w-3.5 bg-[#14205c]" /></span>
      <div className="mt-1 flex w-[138px] items-center gap-1 border-l border-[#0d6fc0] bg-gradient-to-b from-[#2aa5f2] via-[#169aee] to-[#0f86dc] pl-2.5">
        <i className="size-4 bg-[#e8dfae]" />
        <i className="size-4 bg-[#4a9fd8]" />
        <i className="size-4 bg-[#c8cde0]" />
        <time className="ml-auto pr-3 text-xs">上午 08:41</time>
      </div>
      <span className="absolute right-5 bottom-0.5 font-['DejaVu_Sans','Noto_Sans_CJK_SC',sans-serif] text-[17px] leading-5 font-medium whitespace-nowrap text-[#e02a34] [text-shadow:1px_0_#fff,-1px_0_#fff,0_1px_#fff,0_-1px_#fff,1px_1px_#fff,-1px_-1px_#fff]">
        三维网www.3dportal.cn
      </span>
    </div>
  );
}

export default function App() {
  return (
    <div className={`relative flex h-screen flex-col overflow-hidden bg-[#c4c7d2] ${UI}`}>
      <TitleBar />
      <ViewBar />
      <FeatureBar />
      <main className="relative flex min-h-0 flex-1 flex-col">
        <CommandTabs />
        <div className="flex min-h-0 flex-1">
          <div className="flex w-[60px] shrink-0 items-start bg-gradient-to-b from-[#d9dcec] to-[#b7bbd2]">
            <Rail items={RAIL_A} name="標準視角" className="w-[30px] pb-1.5" />
            <Rail items={RAIL_B} name="尺寸對正" className="w-[30px] pb-1.5" />
          </div>
          <div className="flex min-w-0 flex-1 flex-col">
            <div className="relative flex min-h-0 flex-1">
              <PropertyPanel />
              <Viewport />
              <button type="button" aria-label="收合窗格" className="absolute top-[319px] left-[187px] flex h-7 w-2.5 flex-col items-center justify-around rounded-r border border-l-0 border-[#6c6e80] bg-[#e1e4ec] py-0.5 text-[#3c3d4c]">
                {[0, 1, 2].map((k) => (
                  <svg key={k} viewBox="0 0 4 6" className="h-[5px] w-1" aria-hidden="true"><path d="M4 0V6L0 3Z" fill="currentColor" /></svg>
                ))}
              </button>
            </div>
            <MotionTabs />
          </div>
        </div>
        <HeadsUpBar />
        <div className="absolute top-2 right-3 flex items-center gap-2.5 text-[#5f616e]">
          <button type="button" aria-label="最小化文件"><WinGlyph kind="min" className="size-[13px]" /></button>
          <button type="button" aria-label="還原文件" className="ml-1"><WinGlyph kind="max" className="size-[13px]" /></button>
          <button type="button" aria-label="關閉文件"><WinGlyph kind="close" className="size-[11px]" /></button>
        </div>
      </main>
      <SnapBar />
      <StatusBar />
      <TaskBar />
      <OrientationDialog />
      <svg viewBox="0 0 800 500" className="pointer-events-none absolute top-0 left-0 z-10 h-[500px] w-[800px]" fill="none" stroke="#d9202a" aria-hidden="true">
        <rect x="61" y="260.500" width="148" height="54" />
        <path d="M209 293L750 482" />
      </svg>
    </div>
  );
}
